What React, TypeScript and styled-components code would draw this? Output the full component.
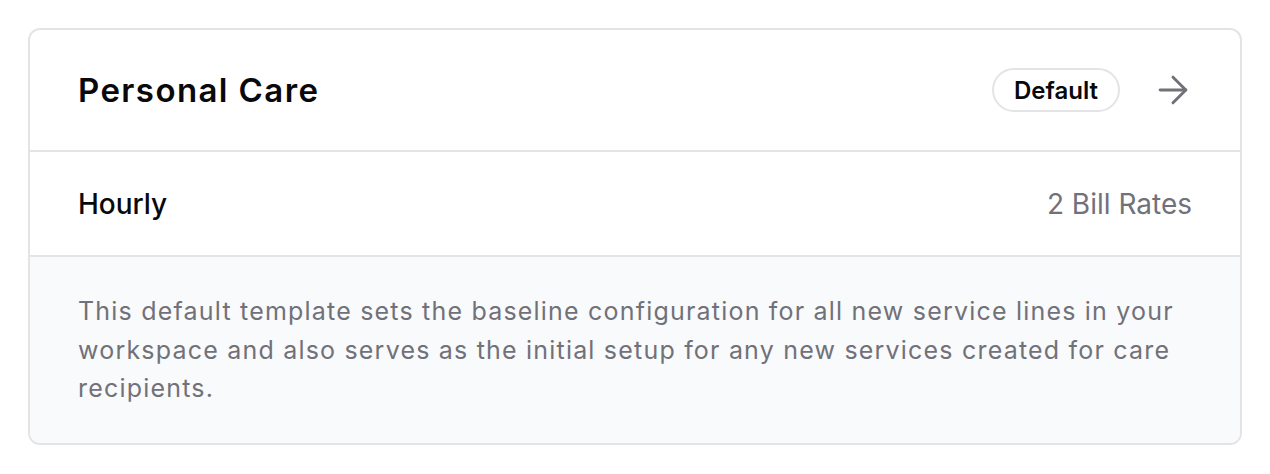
import React from "react";
import styled, { createGlobalStyle } from "styled-components";
import { ArrowRight } from "lucide-react";

const Global = createGlobalStyle`
  html, body { margin: 0; padding: 0; background: #ffffff; }
  body {
    font-family: Inter, "Noto Sans", sans-serif;
    -webkit-font-smoothing: antialiased;
  }
  * { box-sizing: border-box; }
`;

const Page = styled.div`
  padding: 28px;
`;

const Card = styled.section`
  border: 2px solid #e4e4e7;
  border-radius: 12px;
  overflow: hidden;
  background: #ffffff;
`;

const Header = styled.header`
  display: flex;
  align-items: center;
  justify-content: space-between;
  height: 122px;
  padding: 0 45px 0 48px;
  border-bottom: 2px solid #e4e4e7;
`;

const Title = styled.h2`
  margin: 0;
  font-size: 33px;
  font-weight: 600;
  letter-spacing: 1.4px;
  color: #09090b;
`;

const Actions = styled.div`
  display: flex;
  align-items: center;
  gap: 31px;
`;

const Badge = styled.span`
  display: inline-flex;
  align-items: center;
  height: 44px;
  padding: 0 20px;
  border: 2px solid #e4e4e7;
  border-radius: 999px;
  font-size: 24px;
  font-weight: 600;
  color: #09090b;
`;

const IconButton = styled.button`
  display: flex;
  align-items: center;
  justify-content: center;
  padding: 0;
  border: none;
  background: none;
  color: #71717a;
  cursor: pointer;
`;

const Row = styled.div`
  display: flex;
  align-items: center;
  justify-content: space-between;
  height: 105px;
  padding: 0 48px;
  border-bottom: 2px solid #e4e4e7;
`;

const RowLabel = styled.span<{ $muted?: boolean }>`
  font-size: 28px;
  font-weight: ${(p) => (p.$muted ? 400 : 500)};
  color: ${(p) => (p.$muted ? "#71717a" : "#09090b")};
`;

const Footer = styled.div`
  background: #f9fafb;
  padding: 35px 48px 35px;
`;

const Description = styled.p`
  margin: 0;
  font-size: 25px;
  letter-spacing: 1.2px;
  line-height: 38.5px;
  color: #71717a;
`;

export default function App() {
  return (
    <>
      <Global />
      <Page>
        <Card>
          <Header>
            <Title>Personal Care</Title>
            <Actions>
              <Badge>Default</Badge>
              <IconButton aria-label="Open">
                <ArrowRight size={44} strokeWidth={1.6} />
              </IconButton>
            </Actions>
          </Header>
          <Row>
            <RowLabel>Hourly</RowLabel>
            <RowLabel $muted>2 Bill Rates</RowLabel>
          </Row>
          <Footer>
            <Description>
              This default template sets the baseline configuration for all new service lines in your
              workspace and also serves as the initial setup for any new services created for care
              recipients.
            </Description>
          </Footer>
        </Card>
      </Page>
    </>
  );
}
